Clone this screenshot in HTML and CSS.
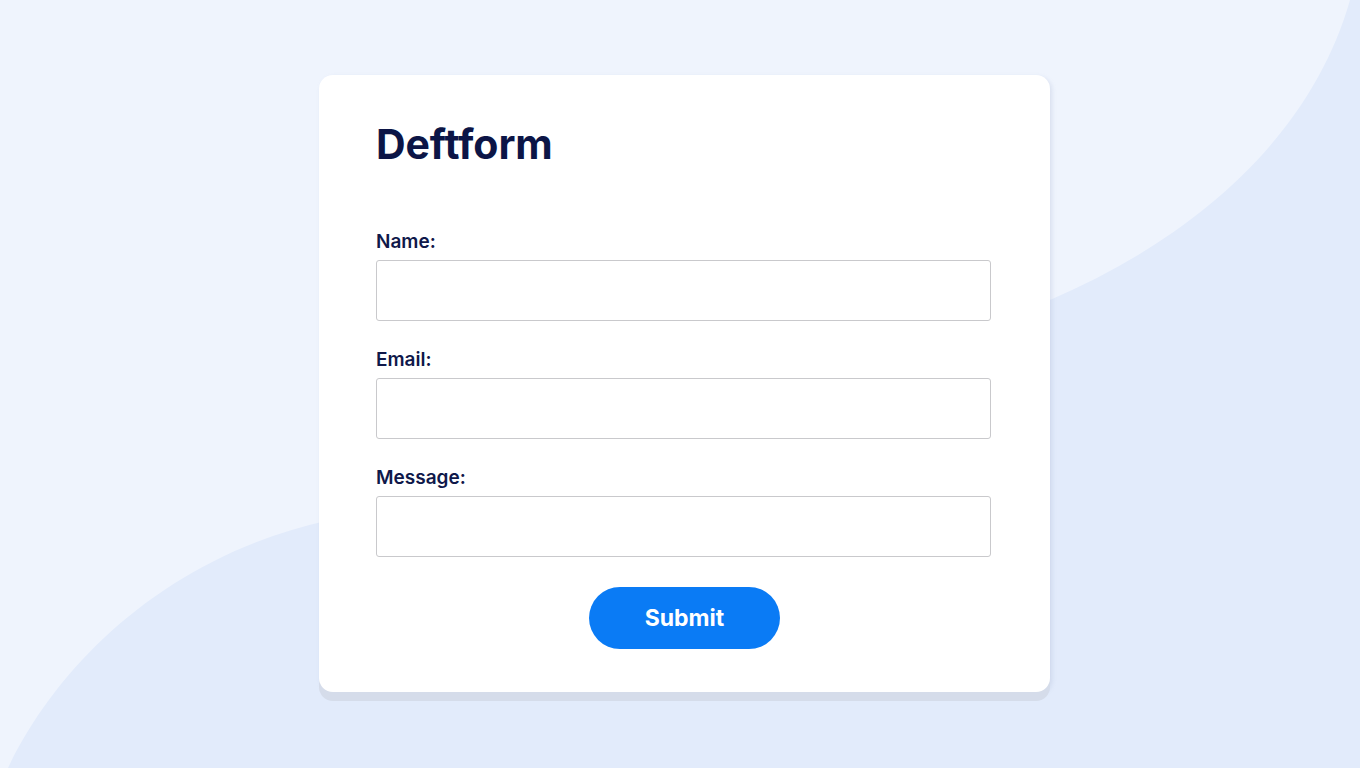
FILE: index.html
```html
<!DOCTYPE html>
<html lang="en">
<head>
<meta charset="utf-8">
<title>Deftform</title>
<link rel="stylesheet" href="styles.css">
</head>
<body>
<svg class="bg" width="1360" height="768" viewBox="0 0 1360 768" aria-hidden="true">
  <rect width="1360" height="768" fill="#eff4fd"/>
  <path d="M 8 768 C 60 660 170 555 330 520 L 700 420 L 1050 300 C 1190 240 1310 140 1350 0 L 1360 0 L 1360 768 Z" fill="#e2ebfb"/>
</svg>
<main class="page">
  <form class="card">
    <h1 class="title">Deftform</h1>
    <div class="field">
      <label class="label" for="name">Name:</label>
      <input class="input" id="name" type="text">
    </div>
    <div class="field">
      <label class="label" for="email">Email:</label>
      <input class="input" id="email" type="email">
    </div>
    <div class="field">
      <label class="label" for="message">Message:</label>
      <input class="input" id="message" type="text">
    </div>
    <div class="actions">
      <button class="submit" type="button">Submit</button>
    </div>
  </form>
</main>
</body>
</html>
```
FILE: styles.css
```css
* { box-sizing: border-box; }
html, body { margin: 0; padding: 0; }
body {
  width: 1360px;
  height: 768px;
  overflow: hidden;
  font-family: Inter, "Liberation Sans", sans-serif;
  position: relative;
}
.bg {
  position: absolute;
  left: 0;
  top: 0;
  z-index: 0;
}
.page {
  position: relative;
  z-index: 1;
  padding: 75px 0 0 319px;
}
.card {
  width: 731px;
  background: #ffffff;
  border-radius: 14px;
  padding: 43px 59px 43px 57px;
  box-shadow: 0 9px 0 #d5dcea, 2px 2px 4px rgba(150, 165, 200, 0.25);
}
.title {
  margin: 0 0 60px 0;
  font-size: 41px;
  line-height: 53px;
  font-weight: 700;
  color: #0c1546;
  letter-spacing: -0.1px;
}
.field {
  display: flex;
  flex-direction: column;
  gap: 7px;
  margin-bottom: 28px;
}
.label {
  font-size: 19px;
  line-height: 22px;
  font-weight: 600;
  color: #0f184a;
}
.input {
  width: 615px;
  height: 61px;
  border: 1px solid #c9c9cc;
  border-radius: 3px;
  background: #fff;
  font: inherit;
}
.actions {
  display: flex;
  justify-content: center;
  padding-top: 2px;
  padding-left: 2px;
}
.submit {
  width: 191px;
  height: 62px;
  border: none;
  border-radius: 31px;
  background: #0a7bf5;
  color: #ffffff;
  font-family: Inter, "Liberation Sans", sans-serif;
  font-size: 23px;
  font-weight: 700;
  cursor: pointer;
}
```
